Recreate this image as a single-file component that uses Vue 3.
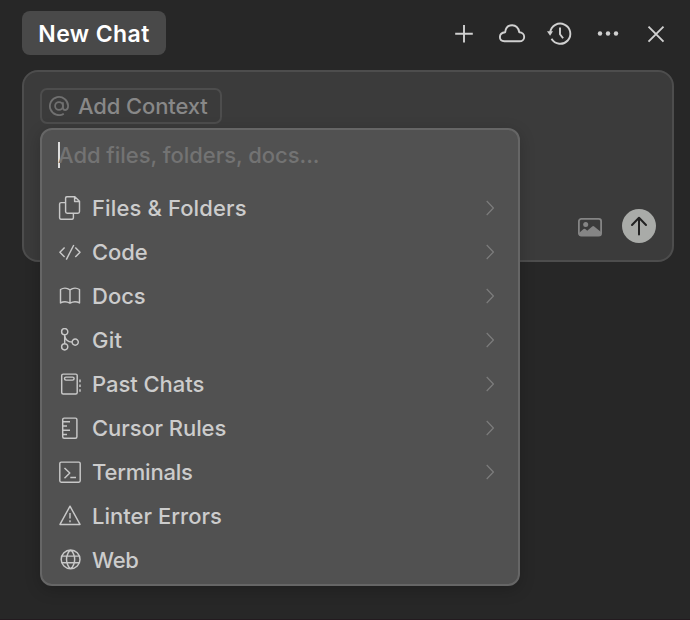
<script setup>
const items = [
  { label: 'Files & Folders', icon: 'files', more: true, track: 0.12 },
  { label: 'Code', icon: 'code', more: true, track: -0.1 },
  { label: 'Docs', icon: 'docs', more: true, track: 0 },
  { label: 'Git', icon: 'git', more: true, track: 0.2 },
  { label: 'Past Chats', icon: 'chats', more: true, track: -0.05 },
  { label: 'Cursor Rules', icon: 'rules', more: true, track: -0.08 },
  { label: 'Terminals', icon: 'terminal', more: true, track: -0.2 },
  { label: 'Linter Errors', icon: 'warning', more: false, track: 0.02 },
  { label: 'Web', icon: 'web', more: false, track: -0.3 },
]

const icons = {
  files: 'M7.6 2V15.6Q7.6 17.2 9.2 17.2H19.9Q21.5 17.2 21.5 15.6V5.3L16.8.7H9.2Q7.6.7 7.6 2ZM16.6.8V5.4H21.3M7.6 6.6H3.1Q1.6 6.6 1.6 8.1V21.8Q1.6 23.3 3.1 23.3H13.9Q15.4 23.3 15.4 21.8V17.2',
  code: 'M6.6 7.6L1.9 12.3L6.6 17M17.3 7.6L22 12.3L17.3 17M15.8 5L8.3 19.6',
  docs: 'M12 5.9Q9.5 4.1 7 4.1Q4.7 4.1 2.5 5.5V18.9Q4.7 17.7 7 17.7Q9.5 17.7 12 19.2ZM12 5.9Q14.5 4.1 17 4.1Q19.3 4.1 21.5 5.5V18.9Q19.3 17.7 17 17.7Q14.5 17.7 12 19.2Z',
  git: 'M9.8 3.7A3.1 3.1 0 1 1 3.6 3.7A3.1 3.1 0 1 1 9.8 3.7ZM9.8 18.8A3.1 3.1 0 1 1 3.6 18.8A3.1 3.1 0 1 1 9.8 18.8ZM20.3 14.1A3.1 3.1 0 1 1 14.1 14.1A3.1 3.1 0 1 1 20.3 14.1ZM6.7 6.8V15.7M6.7 7.5Q7.5 13.8 14.1 14.1',
  chats: 'M5.2 2.1H17.7Q19.2 2.1 19.2 3.6V20.4Q19.2 21.9 17.7 21.9H5.2Q3.7 21.9 3.7 20.4V3.6Q3.7 2.1 5.2 2.1ZM8 5.1H14.6A1.5 1.5 0 0 1 14.6 8.1H8A1.5 1.5 0 0 1 8 5.1ZM22 7.5V10.2M22 12.4V15M22 17.2V19.7',
  rules: 'M6.2 2.1H17.4Q18.9 2.1 18.9 3.6V20.8Q18.9 22.3 17.4 22.3H6.2Q4.7 22.3 4.7 20.8V3.6Q4.7 2.1 6.2 2.1ZM4.7 5.7H12M4.7 9.9H9M4.7 14.2H12M4.7 18.5H9',
  terminal: 'M3.2 2.1H20.8Q22.2 2.1 22.2 3.5V20.8Q22.2 22.2 20.8 22.2H3.2Q1.8 22.2 1.8 20.8V3.5Q1.8 2.1 3.2 2.1ZM6.5 8L11.8 13.1L6.5 18.2M12.3 17.4H18',
  warning: 'M12 2.2L22 20.4H2ZM12 9V14.5M12 16.3V18.3',
  web: 'M22 11.4A9.4 9.4 0 1 1 3.2 11.4A9.4 9.4 0 1 1 22 11.4ZM4.2 8.1H21M4.2 14.8H21M12.6 2C7.2 6.8 7.2 16 12.6 20.8C18 16 18 6.8 12.6 2Z',
}
</script>

<template>
  <div class="panel">
    <header class="header">
      <button class="tab">New Chat</button>
      <nav class="actions">
        <svg class="icon" viewBox="0 0 28 28"><path d="M14 5V22.6M5.2 13.8H22.8" /></svg>
        <svg class="icon" viewBox="0 0 28 28"><path d="M6.4 21.3H21.5C24.2 21.3 26.2 19.3 26.2 16.9C26.2 14.3 24.2 12.2 21.3 12.2C20.4 8 17.7 5.3 14.2 5.3C10.3 5.3 7.6 8 7.2 12.2C3.9 12.5 1.9 14.5 1.9 17.1C1.9 19.6 3.8 21.3 6.4 21.3Z" /></svg>
        <svg class="icon" viewBox="0 0 28 28"><path d="M4.2 12.5A10.1 10.1 0 1 1 5.5 18.8M14 7.5V14.2L17.1 18.3" /><path class="solid" d="M1 11.2H7L4.1 15.8Z" /></svg>
        <svg class="icon" viewBox="0 0 28 28"><g class="dots"><circle cx="6" cy="13.5" r="2.2" /><circle cx="14" cy="13.5" r="2.2" /><circle cx="22" cy="13.5" r="2.2" /></g></svg>
        <svg class="icon" viewBox="0 0 28 28"><path d="M6.5 6.6L21.5 21.6M21.5 6.6L6.5 21.6" /></svg>
      </nav>
    </header>

    <section class="composer">
      <button class="context">
        <svg class="at" viewBox="0 0 20 20"><circle cx="10" cy="10" r="3.9" /><path d="M13.9 6.2V11.2Q13.9 14 16.2 14Q19.1 13.7 19.1 9.8A9.1 9.1 0 1 0 14.8 17.8" /></svg>
        <span>Add Context</span>
      </button>
      <div class="tools">
        <svg class="image" viewBox="0 0 24 19">
          <rect x=".9" y=".9" width="22.2" height="16.7" rx="2.4" />
          <circle cx="7.7" cy="6.6" r="2.5" />
          <path d="M1 15L5.6 11.1Q6.6 10.3 7.6 11.3L9.2 12.8L14.2 8.4Q15.2 7.7 16.2 8.5L23 14V17.5H1Z" />
        </svg>
        <button class="send">
          <svg viewBox="0 0 34 34"><path d="M17 25.5V9M10 16L17 8.8L24 16" /></svg>
        </button>
      </div>

      <div class="menu">
        <div class="search"><i class="caret"></i><span>Add files, folders, docs...</span></div>
        <ul class="list">
          <li v-for="item in items" :key="item.icon" class="item">
            <svg class="glyph" viewBox="0 0 24 24"><path :d="icons[item.icon]" /></svg>
            <span class="label" :style="{ letterSpacing: item.track + 'px' }">{{ item.label }}</span>
            <svg v-if="item.more" class="chevron" viewBox="0 0 8 16"><path d="M.7 1L7.4 8L.7 15" /></svg>
          </li>
        </ul>
      </div>
    </section>
  </div>
</template>

<style>
body {
  background: #272727;
}
</style>

<style scoped>
.panel {
  box-sizing: border-box;
  height: 620px;
  padding: 11px 16px 0 22px;
  background: #272727;
  border-bottom: 1px solid #231a1f;
  font-family: Inter, "Liberation Sans", sans-serif;
  font-size: 22px;
  font-weight: 450;
  overflow: hidden;
}

button {
  margin: 0;
  border: 0;
  padding: 0;
  font: inherit;
}

svg {
  display: block;
  flex: none;
  fill: none;
  stroke-linejoin: round;
}

.header {
  display: flex;
  justify-content: space-between;
  height: 44px;
  margin-bottom: 15px;
}

.tab {
  width: 144px;
  padding-top: 1px;
  border-radius: 8px;
  background: #494949;
  color: #fff;
  font-size: 23px;
  font-weight: 600;
  letter-spacing: 0.4px;
  white-space: nowrap;
}

.actions {
  display: flex;
  gap: 20px;
  padding: 8.5px 4px 0 0;
}

.icon {
  width: 28px;
  height: 28px;
  stroke: #d0d0d0;
  stroke-width: 1.9;
}

.solid,
.dots {
  fill: #d0d0d0;
  stroke: none;
}

.composer {
  position: relative;
  box-sizing: border-box;
  display: flex;
  flex-direction: column;
  justify-content: space-between;
  align-items: flex-start;
  height: 192px;
  padding: 16px 16px 17px;
  border: 2px solid #4d4d4d;
  border-radius: 16px;
  background: #3b3b3b;
}

.context {
  box-sizing: border-box;
  display: flex;
  align-items: center;
  gap: 9px;
  width: 182px;
  height: 36px;
  padding-left: 7px;
  border: 2px solid #4d4d4d;
  border-radius: 7px;
  background: transparent;
  color: #888;
  letter-spacing: -0.12px;
  white-space: nowrap;
}

.at {
  width: 20px;
  height: 20px;
  stroke: #707070;
  stroke-width: 1.8;
}

.tools {
  display: flex;
  align-items: center;
  align-self: flex-end;
  gap: 20px;
}

.image {
  width: 24px;
  height: 19px;
  margin-top: 2px;
  stroke: #858585;
  stroke-width: 1.8;
}

.image circle,
.image path {
  fill: #858585;
  stroke: none;
}

.send {
  width: 34px;
  height: 34px;
  border-radius: 50%;
  background: #a9aba8;
}

.send svg {
  stroke: #222;
  stroke-width: 2;
  stroke-linecap: round;
}

.menu {
  position: absolute;
  top: 56px;
  left: 16px;
  box-sizing: border-box;
  width: 480px;
  height: 458px;
  border: 2px solid #666;
  border-radius: 12px;
  background: #515151;
  box-shadow: 0 4px 16px rgba(0, 0, 0, 0.2);
}

.search {
  display: flex;
  align-items: center;
  height: 50px;
  padding-left: 16px;
  color: #737373;
  letter-spacing: -0.03px;
}

.caret {
  width: 2px;
  height: 26px;
  margin-right: -2px;
  background: #ddd;
}

.list {
  margin: 0;
  padding: 6px 24px 0 16px;
  list-style: none;
}

.item {
  display: flex;
  align-items: center;
  height: 44px;
  color: #ccc;
}

.glyph {
  width: 24px;
  height: 24px;
  margin-right: 10px;
  stroke: #c8c8c8;
  stroke-width: 1.45;
}

.label {
  flex: 1;
  white-space: nowrap;
}

.chevron {
  width: 8px;
  height: 16px;
  stroke: #7c7c7c;
  stroke-width: 1.2;
}
</style>
